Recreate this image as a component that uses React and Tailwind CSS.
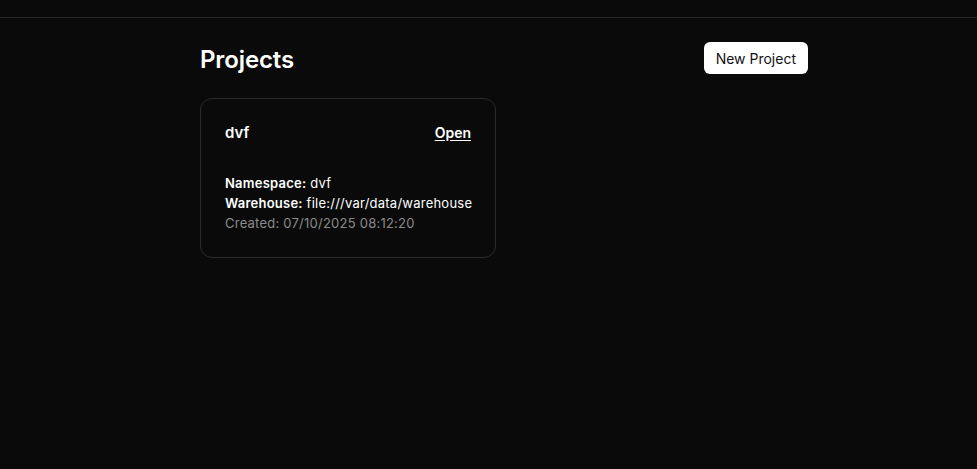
export default function App() {
  return (
    <div className="min-h-screen bg-[#0a0a0a] text-white font-['Inter',sans-serif]">
      {/* Top bar */}
      <header className="h-[18px] border-b border-[#262626]" />

      <main className="pl-[200px] pt-[24px]">
        <div className="w-[608px]">
          <div className="flex items-center justify-between">
            <h1 className="text-[24px] font-semibold tracking-[-0.005em]">Projects</h1>
            <button className="bg-white text-[#111] text-[14px] rounded-md px-3 h-[32px] mt-[-4px]">
              New Project
            </button>
          </div>

          <div className="mt-[20px] w-[296px] rounded-xl border border-[#2a2a2a] px-6 pt-[22px] pb-6">
            <div className="flex items-center justify-between leading-[24px]">
              <span className="text-[15px] font-semibold">dvf</span>
              <a href="#" className="text-[14px] font-semibold underline underline-offset-2">
                Open
              </a>
            </div>
            <div className="mt-[28px] text-[13px] leading-[20px] tracking-[0.018em] whitespace-nowrap">
              <p>
                <span className="font-semibold">Namespace:</span> dvf
              </p>
              <p>
                <span className="font-semibold">Warehouse:</span> file:///var/data/warehouse
              </p>
              <p className="text-[#8a8a8a]">Created: 07/10/2025 08:12:20</p>
            </div>
          </div>
        </div>
      </main>
    </div>
  );
}
